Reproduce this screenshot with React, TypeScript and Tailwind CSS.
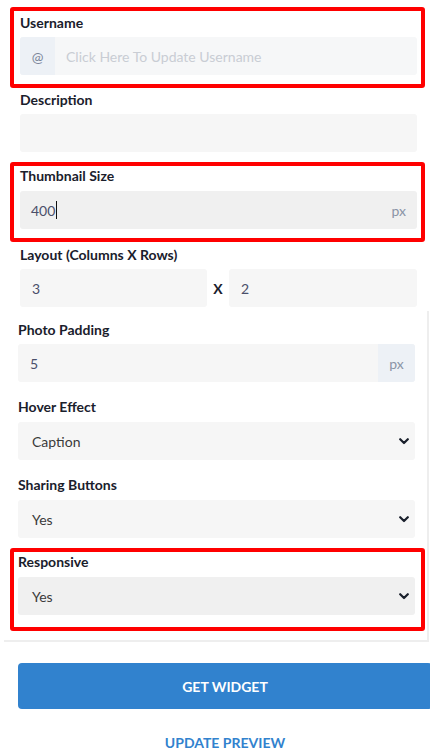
import { ReactNode } from 'react'

const font = { fontFamily: 'Lato, "Open Sans", sans-serif' }

function Label({ children }: { children: ReactNode }) {
  return <p className="text-[14px] font-bold leading-[20px] text-[#1a202c]">{children}</p>
}

function Chevron() {
  return (
    <svg width="10" height="7" viewBox="0 0 10 7" className="shrink-0">
      <path d="M1.2 1.2 L5 5 L8.8 1.2" fill="none" stroke="#1a202c" strokeWidth="2.2" strokeLinecap="round" strokeLinejoin="round" />
    </svg>
  )
}

function Select({ value, focused }: { value: string; focused?: boolean }) {
  return (
    <div
      className={`mt-[5px] flex h-[38px] items-center justify-between rounded-[3px] pl-[14px] pr-[6px] text-[14px] text-[#3a3a3a] ${focused ? 'bg-[#f0f0f0]' : 'bg-[#f6f6f6]'}`}
    >
      <span>{value}</span>
      <Chevron />
    </div>
  )
}

export default function App() {
  return (
    <div className="w-[430px] h-[756px] overflow-hidden bg-white" style={font}>
      {/* top fields */}
      <div className="pt-[7px]">
        <div className="mx-[10px] w-[415px] rounded-[3px] border-4 border-[#ff0000] pl-[6px] pr-[4px] pt-[2px] pb-[9px]">
          <Label>Username</Label>
          <div className="mt-[4px] flex h-[38px] rounded-[3px] bg-[#f6f7f8]">
            <div className="flex w-[35px] items-center justify-center rounded-l-[3px] bg-[#edf1f6] text-[14px] text-[#7a8599]">@</div>
            <span className="flex items-center pl-[11px] text-[14px] text-[#c9cdd4]">Click Here To Update Username</span>
          </div>
        </div>

        <div className="mt-[2px] px-[20px] w-[437px]">
          <Label>Description</Label>
          <div className="mt-[4px] h-[38px] rounded-[3px] bg-[#f6f6f6]" />
        </div>

        <div className="mt-[10px] mx-[10px] w-[415px] rounded-[3px] border-4 border-[#ff0000] pl-[6px] pr-[4px] pb-[9px]">
          <Label>Thumbnail Size</Label>
          <div className="mt-[5px] flex h-[38px] items-center justify-between rounded-[3px] bg-[#f0f0f0] pl-[11px] pr-[11px] text-[14px]">
            <span className="flex items-center text-[#4a4f6a]">
              400<span className="ml-[1px] inline-block h-[18px] w-[1px] bg-[#111]" />
            </span>
            <span className="text-[#8a94a6]">px</span>
          </div>
        </div>

        <div className="mt-[3px] px-[20px] w-[437px]">
          <Label>Layout (Columns X Rows)</Label>
          <div className="mt-[4px] flex items-center">
            <div className="flex h-[38px] w-[187px] items-center rounded-[3px] bg-[#f6f6f6] pl-[12px] text-[14px] text-[#4a4f6a]">3</div>
            <span className="w-[22px] text-center text-[14px] font-bold text-[#1a202c]">X</span>
            <div className="flex h-[38px] flex-1 items-center rounded-[3px] bg-[#f6f6f6] pl-[12px] text-[14px] text-[#4a4f6a]">2</div>
          </div>
        </div>
      </div>

      {/* settings card */}
      <div className="mt-[4px] ml-[4px] w-[425px] border-r-2 border-b-2 border-[#eeeeee] pt-[9px] pb-[9px]">
        <div className="pl-[14px] pr-[12px]">
          <Label>Photo Padding</Label>
          <div className="mt-[4px] flex h-[38px] rounded-[3px] bg-[#f6f6f6]">
            <span className="flex flex-1 items-center pl-[12px] text-[14px] text-[#4a4f6a]">5</span>
            <div className="flex w-[37px] items-center justify-center rounded-r-[3px] bg-[#edf1f6] text-[14px] text-[#8a94a6]">px</div>
          </div>
        </div>

        <div className="mt-[15px] pl-[14px] pr-[12px]">
          <Label>Hover Effect</Label>
          <Select value="Caption" />
        </div>

        <div className="mt-[15px] pl-[14px] pr-[12px]">
          <Label>Sharing Buttons</Label>
          <Select value="Yes" />
        </div>

        <div className="mt-[10px] ml-[6px] w-[415px] rounded-[3px] border-4 border-[#ff0000] pl-[4px] pr-[6px] pb-[12px]">
          <Label>Responsive</Label>
          <Select value="Yes" focused />
        </div>
      </div>

      {/* actions */}
      <div className="ml-[18px] mt-[21px] w-[414px]">
        <button className="flex h-[46px] w-full items-center justify-center rounded-[4px] bg-[#3182ce] text-[14px] font-bold uppercase text-white">
          Get Widget
        </button>
        <p className="mt-[24px] text-center text-[14px] font-bold uppercase leading-[20px] text-[#3182ce]">Update Preview</p>
      </div>
    </div>
  )
}
